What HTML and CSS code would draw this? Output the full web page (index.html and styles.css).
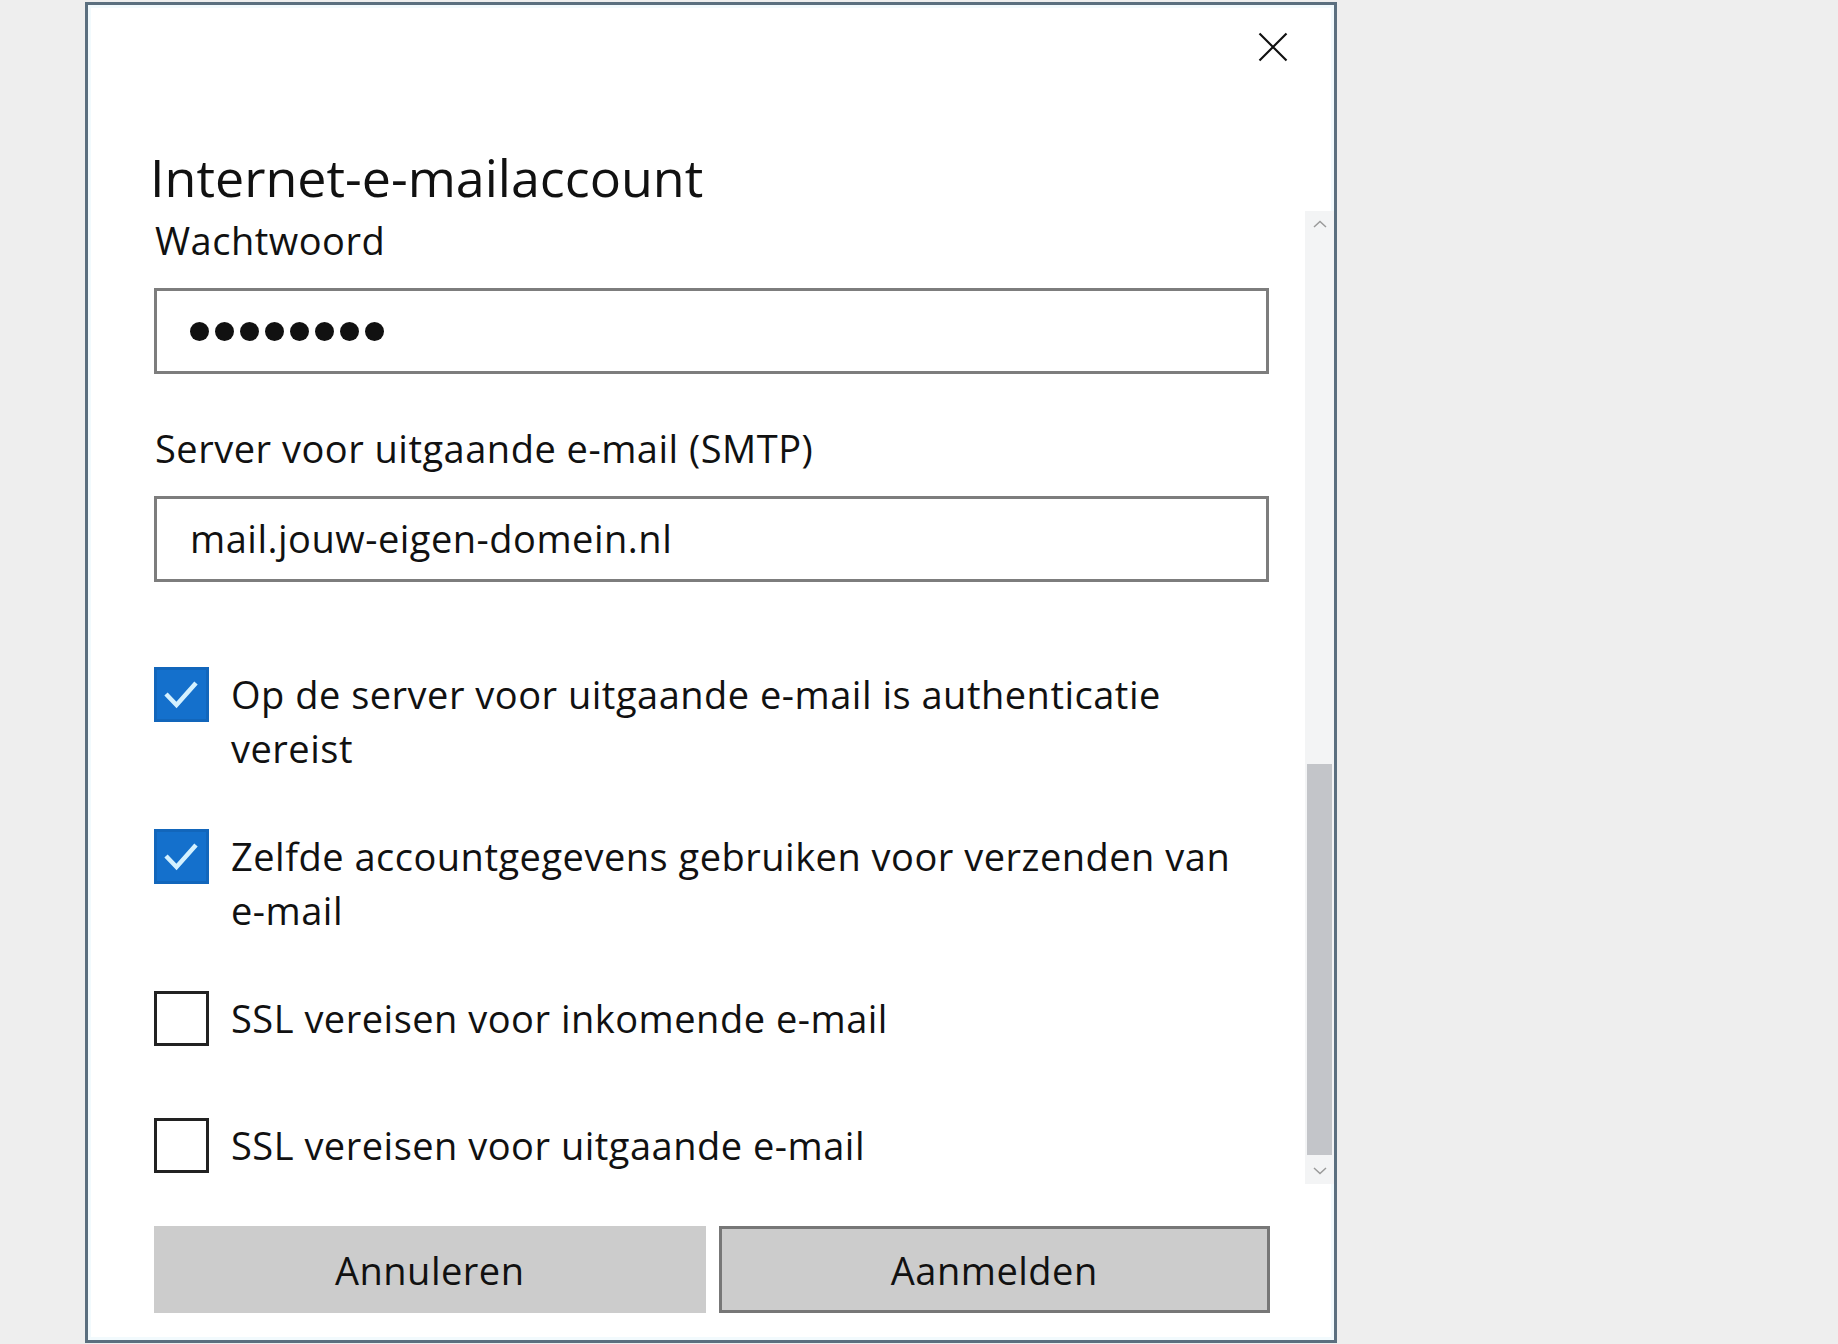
FILE: index.html
```html
<!DOCTYPE html>
<html lang="nl">
<head>
<meta charset="utf-8">
<title>Internet-e-mailaccount</title>
<link rel="stylesheet" href="styles.css">
</head>
<body>
<div class="dialog">
  <div class="header">
    <button class="close" aria-label="Sluiten">
      <svg viewBox="0 0 30 30" width="30" height="30"><path d="M1.5 1.5 L28.5 28.5 M28.5 1.5 L1.5 28.5" stroke="#111" stroke-width="2.2" fill="none"/></svg>
    </button>
  </div>
  <h1 class="title">Internet-e-mailaccount</h1>
  <div class="scroll-area">
    <div class="content">
      <div class="label">Wachtwoord</div>
      <div class="input"><span class="dots"><i></i><i></i><i></i><i></i><i></i><i></i><i></i><i></i></span></div>
      <div class="label label-gap">Server voor uitgaande e-mail (SMTP)</div>
      <div class="input"><span class="value">mail.jouw-eigen-domein.nl</span></div>

      <div class="check-row first">
        <span class="box checked"><svg viewBox="0 0 49 49" width="49" height="49"><path d="M9 24 L19.5 35 L39 13" stroke="#d4f1ff" stroke-width="4.5" fill="none"/></svg></span>
        <span class="check-text">Op de server voor uitgaande e-mail is authenticatie<br>vereist</span>
      </div>
      <div class="check-row">
        <span class="box checked"><svg viewBox="0 0 49 49" width="49" height="49"><path d="M9 24 L19.5 35 L39 13" stroke="#d4f1ff" stroke-width="4.5" fill="none"/></svg></span>
        <span class="check-text">Zelfde accountgegevens gebruiken voor verzenden van<br>e-mail</span>
      </div>
      <div class="check-row">
        <span class="box"></span>
        <span class="check-text">SSL vereisen voor inkomende e-mail</span>
      </div>
      <div class="check-row last">
        <span class="box"></span>
        <span class="check-text">SSL vereisen voor uitgaande e-mail</span>
      </div>
    </div>
    <div class="scrollbar">
      <div class="arrow up"><svg viewBox="0 0 14 8" width="14" height="8"><path d="M1 7 L7 1.5 L13 7" stroke="#9a9a9a" stroke-width="1.5" fill="none"/></svg></div>
      <div class="track"><div class="thumb"></div></div>
      <div class="arrow down"><svg viewBox="0 0 14 8" width="14" height="8"><path d="M1 1 L7 6.5 L13 1" stroke="#9a9a9a" stroke-width="1.5" fill="none"/></svg></div>
    </div>
  </div>
  <div class="footer">
    <button class="btn">Annuleren</button>
    <button class="btn primary">Aanmelden</button>
  </div>
</div>
</body>
</html>
```

FILE: styles.css
```css
html, body {
  margin: 0;
  padding: 0;
  background: #eeeeee;
}
body {
  font-family: "Open Sans", "Noto Sans", sans-serif;
  color: #111;
}
.dialog {
  margin: 2px 0 0 85px;
  width: 1246px;
  height: 1335px;
  border: 3px solid #5b6f7f;
  background: #fff;
  display: flex;
  flex-direction: column;
  box-shadow: inset 0 0 0 3px #f2fafd;
}
.header {
  height: 141px;
  display: flex;
  justify-content: flex-end;
  align-items: flex-start;
}
.close {
  width: 60px;
  height: 60px;
  margin: 12px 31px 0 0;
  border: 0;
  background: transparent;
  padding: 0;
  display: flex;
  align-items: center;
  justify-content: center;
}
.title {
  margin: 0;
  padding-left: 62px;
  height: 62px;
  font-size: 52px;
  line-height: 62px;
  font-weight: 400;
  letter-spacing: 0;
  color: #111;
}
.scroll-area {
  height: 976px;
  display: flex;
}
.content {
  flex: 1;
  padding: 6px 36px 0 66px;
}
.label {
  font-size: 38px;
  line-height: 52px;
  letter-spacing: 0.5px;
  padding-left: 1px;
}
.label-gap {
  margin-top: 48px;
}
.input {
  margin-top: 22px;
  height: 80px;
  border: 3px solid #7d7d7d;
  display: flex;
  align-items: center;
  padding-left: 33px;
  font-size: 38px;
  letter-spacing: 0.5px;
}
.dots {
  display: flex;
  gap: 6px;
}
.dots i {
  width: 19px;
  height: 19px;
  border-radius: 50%;
  background: #111;
}
.value {
  margin-top: -2px;
}
.check-row {
  display: flex;
  align-items: flex-start;
  margin-top: 54px;
}
.check-row.first {
  margin-top: 85px;
}
.check-row.last {
  margin-top: 72px;
}
.box {
  flex: none;
  width: 49px;
  height: 49px;
  border: 3px solid #222;
  background: #fff;
  margin-right: 22px;
  display: flex;
}
.box.checked {
  background: #1470cc;
  border-color: #1266bb;
}
.box svg {
  width: 49px;
  height: 49px;
}
.check-text {
  font-size: 38px;
  line-height: 54px;
  letter-spacing: 0.5px;
}
.scrollbar {
  width: 29px;
  margin-top: 3px;
  background: #f3f4f5;
  display: flex;
  flex-direction: column;
}
.arrow {
  height: 26px;
  display: flex;
  align-items: center;
  justify-content: center;
}
.track {
  flex: 1;
  display: flex;
  flex-direction: column;
  justify-content: flex-end;
}
.thumb {
  height: 391px;
  margin: 0 2px 3px 2px;
  background: #c3c5c9;
}
.footer {
  display: flex;
  gap: 13px;
  padding: 42px 64px 0 66px;
}
.btn {
  flex: 1;
  height: 87px;
  border: 3px solid #cccccc;
  background: #cccccc;
  font-family: "Open Sans", "Noto Sans", sans-serif;
  font-size: 38px;
  letter-spacing: 0.5px;
  color: #111;
  padding: 0;
}
.btn.primary {
  border-color: #777777;
}
```
